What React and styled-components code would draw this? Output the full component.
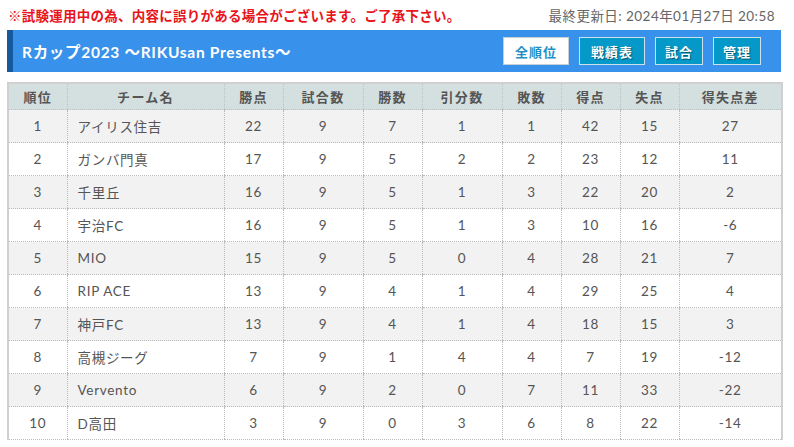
import React from "react";
import styled, { createGlobalStyle } from "styled-components";

const Global = createGlobalStyle`
  html, body { margin: 0; padding: 0; background: #fff; }
  body { font-family: Lato, "Noto Sans CJK JP", sans-serif; color: #555; }
`;

const Page = styled.div`
  width: 774px;
  margin-left: 7px;
  padding-top: 5px;
`;

const TopLine = styled.div`
  display: flex;
  justify-content: space-between;
  align-items: center;
  height: 20px;
  font-size: 13.5px;
`;

const Notice = styled.span`
  color: #e8141b;
  font-weight: 700;
  padding-left: 1px;
  letter-spacing: 0.25px;
`;

const Updated = styled.span`
  color: #666;
  font-size: 13.5px;
  letter-spacing: 0.45px;
  margin-right: 6px;
`;

const Bar = styled.div`
  margin-top: 5px;
  height: 42px;
  background: #3891ea;
  border-left: 6px solid #17589f;
  display: flex;
  align-items: center;
  justify-content: space-between;
  padding: 0 20px 0 9px;
`;

const Title = styled.h1`
  margin: 0;
  font-size: 15.5px;
  font-weight: 700;
  color: #fff;
  letter-spacing: 0.7px;
`;

const Nav = styled.div`
  display: flex;
  gap: 10px;
`;

const NavButton = styled.button`
  height: 28px;
  padding: 0 ${(p) => (p.$wide ? 11 : 9)}px;
  font-family: Lato, "Noto Sans CJK JP", sans-serif;
  font-size: 13px;
  font-weight: 700;
  letter-spacing: 1px;
  border: 1px solid ${(p) => (p.$active ? "#c8cfd4" : "#cde1ea")};
  background: ${(p) => (p.$active ? "#fff" : "#0499c9")};
  color: ${(p) => (p.$active ? "#1f8fc4" : "#fff")};
  text-shadow: ${(p) => (p.$active ? "none" : "1px 1px 1px rgba(0,0,0,0.45)")};
  cursor: pointer;
`;

const Table = styled.table`
  margin-top: 10px;
  width: 774px;
  border-collapse: collapse;
  table-layout: fixed;
  border-left: 2px solid #d0d0d0;
  border-right: 2px solid #d0d0d0;
  border-top: 2px solid #d0d0d0;
`;

const Th = styled.th`
  height: 25px;
  padding: 0;
  background: #d4dfdf;
  font-size: 13px;
  font-weight: 700;
  color: #555;
  letter-spacing: 1.3px;
  text-align: center;
  border-left: 1px dotted #b8c4c4;
  border-bottom: 1px dotted #b8c4c4;
`;

const Row = styled.tr`
  background: ${(p) => (p.$odd ? "#f2f2f2" : "#fff")};
`;

const Td = styled.td`
  height: 32px;
  padding: 0;
  padding-left: ${(p) => (p.$left ? "10px" : "0")};
  font-size: 13.5px;
  color: #555;
  letter-spacing: 0.7px;
  text-align: ${(p) => (p.$left ? "left" : "center")};
  border-left: 1px dotted #bbb;
  border-bottom: 1px dotted #bbb;
`;

const cols = [59, 157, 59, 80, 59, 80, 59, 59, 59, 103];
const heads = ["順位", "チーム名", "勝点", "試合数", "勝数", "引分数", "敗数", "得点", "失点", "得失点差"];
const rows = [
  [1, "アイリス住吉", 22, 9, 7, 1, 1, 42, 15, 27],
  [2, "ガンバ門真", 17, 9, 5, 2, 2, 23, 12, 11],
  [3, "千里丘", 16, 9, 5, 1, 3, 22, 20, 2],
  [4, "宇治FC", 16, 9, 5, 1, 3, 10, 16, -6],
  [5, "MIO", 15, 9, 5, 0, 4, 28, 21, 7],
  [6, "RIP ACE", 13, 9, 4, 1, 4, 29, 25, 4],
  [7, "神戸FC", 13, 9, 4, 1, 4, 18, 15, 3],
  [8, "高槻ジーグ", 7, 9, 1, 4, 4, 7, 19, -12],
  [9, "Vervento", 6, 9, 2, 0, 7, 11, 33, -22],
  [10, "D高田", 3, 9, 0, 3, 6, 8, 22, -14],
];

export default function App() {
  return (
    <>
      <Global />
      <Page>
        <TopLine>
          <Notice>※試験運用中の為、内容に誤りがある場合がございます。ご了承下さい。</Notice>
          <Updated>最終更新日: 2024年01月27日 20:58</Updated>
        </TopLine>
        <Bar>
          <Title>Rカップ2023 ～RIKUsan Presents～</Title>
          <Nav>
            <NavButton $active $wide>全順位</NavButton>
            <NavButton $wide>戦績表</NavButton>
            <NavButton>試合</NavButton>
            <NavButton>管理</NavButton>
          </Nav>
        </Bar>
        <Table>
          <colgroup>
            {cols.map((w, i) => (
              <col key={i} style={{ width: w }} />
            ))}
          </colgroup>
          <thead>
            <tr>
              {heads.map((h) => (
                <Th key={h}>{h}</Th>
              ))}
            </tr>
          </thead>
          <tbody>
            {rows.map((r, i) => (
              <Row key={i} $odd={i % 2 === 0}>
                {r.map((c, j) => (
                  <Td key={j} $left={j === 1}>
                    {c}
                  </Td>
                ))}
              </Row>
            ))}
          </tbody>
        </Table>
      </Page>
    </>
  );
}
